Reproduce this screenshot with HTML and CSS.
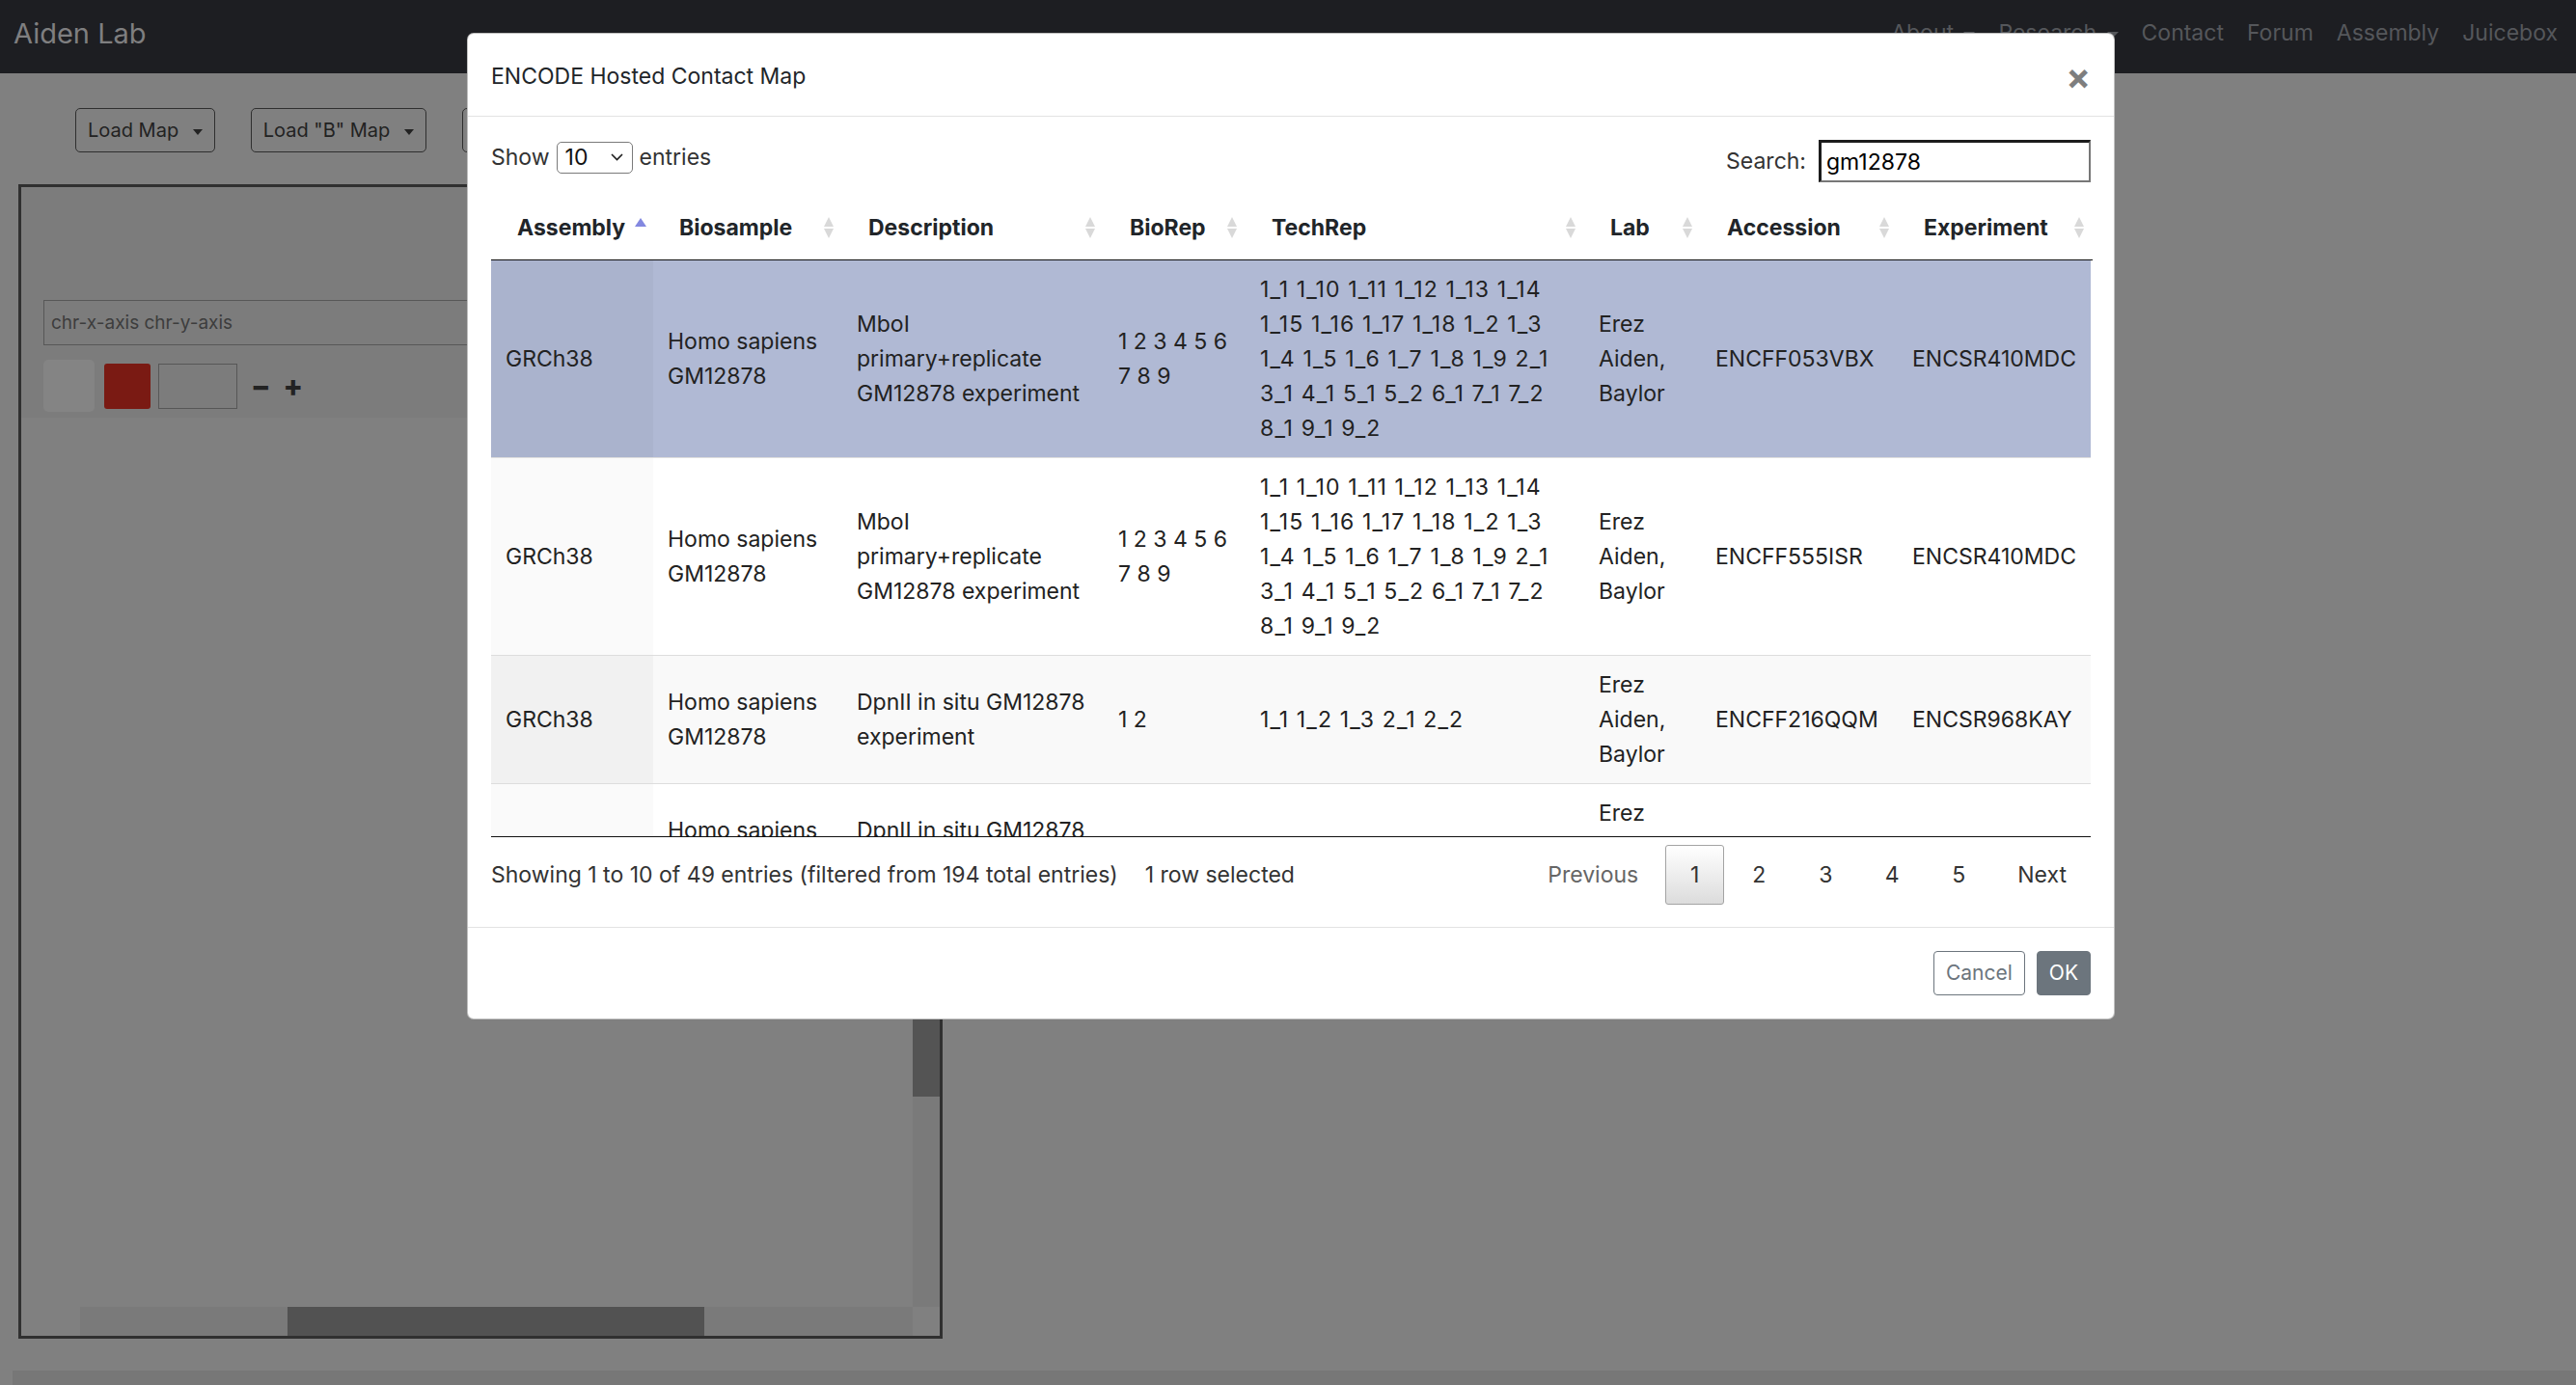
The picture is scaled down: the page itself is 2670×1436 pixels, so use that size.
FILE: index.html
```html
<!DOCTYPE html>
<html lang="en">
<head>
<meta charset="utf-8">
<title>Aiden Lab</title>
<link rel="stylesheet" href="styles.css">
</head>
<body>
<nav class="navbar">
  <span class="brand">Aiden Lab</span>
  <ul class="nav-links">
    <li>About <span class="caret"></span></li>
    <li>Research <span class="caret"></span></li>
    <li>Contact</li>
    <li>Forum</li>
    <li>Assembly</li>
    <li>Juicebox</li>
  </ul>
</nav>

<main class="page">
  <div class="toolbar">
    <button class="tb-btn">Load Map <span class="caret"></span></button>
    <button class="tb-btn">Load "B" Map <span class="caret"></span></button>
    <button class="tb-btn">Load Tracks <span class="caret"></span></button>
  </div>

  <section class="viewer">
    <div class="viewer-top">
      <div class="locus">chr-x-axis chr-y-axis</div>
      <div class="controls">
        <span class="ctl-blank"></span>
        <span class="ctl-red"></span>
        <span class="ctl-white"></span>
        <span class="ctl-sign minus">&minus;</span>
        <span class="ctl-sign plus">+</span>
      </div>
    </div>
    <div class="viewer-main">
      <div class="axis"></div>
      <div class="map"></div>
      <div class="vscroll"><div class="vthumb"></div></div>
      <div class="axis"></div>
      <div class="hscroll"><div class="hthumb"></div></div>
      <div class="corner"></div>
    </div>
  </section>

  <div class="bottom-bar"></div>
</main>

<div class="modal">
  <div class="modal-header">
    <h5 class="modal-title">ENCODE Hosted Contact Map</h5>
    <span class="close">&times;</span>
  </div>
  <div class="modal-body">
    <div class="dt-top">
      <div class="dt-length">
        <span>Show</span>
        <span class="select"><span>10</span><svg width="13" height="8" viewBox="0 0 13 8"><polyline points="1,1 6.5,6.5 12,1" fill="none" stroke="#1e1e1e" stroke-width="1.6"/></svg></span>
        <span>entries</span>
      </div>
      <div class="dt-filter">
        <span>Search:</span>
        <input class="search" type="text" value="gm12878">
      </div>
    </div>

    <table class="dt dt-head">
      <colgroup>
        <col class="c1"><col class="c2"><col class="c3"><col class="c4"><col class="c5"><col class="c6"><col class="c7"><col class="c8">
      </colgroup>
      <thead>
        <tr>
          <th class="sorting_asc">Assembly</th>
          <th class="sorting">Biosample</th>
          <th class="sorting">Description</th>
          <th class="sorting">BioRep</th>
          <th class="sorting">TechRep</th>
          <th class="sorting">Lab</th>
          <th class="sorting">Accession</th>
          <th class="sorting">Experiment</th>
        </tr>
      </thead>
    </table>

    <div class="dt-scroll">
      <table class="dt dt-body">
        <colgroup>
          <col class="c1"><col class="c2"><col class="c3"><col class="c4"><col class="c5"><col class="c6"><col class="c7"><col class="c8">
        </colgroup>
        <tbody>
          <tr class="odd selected">
            <td class="sorting_1">GRCh38</td>
            <td>Homo sapiens<br>GM12878</td>
            <td>MboI<br>primary+replicate<br>GM12878 experiment</td>
            <td>1 2 3 4 5 6<br>7 8 9</td>
            <td class="rep">1_1 1_10 1_11 1_12 1_13 1_14<br>1_15 1_16 1_17 1_18 1_2 1_3<br>1_4 1_5 1_6 1_7 1_8 1_9 2_1<br>3_1 4_1 5_1 5_2 6_1 7_1 7_2<br>8_1 9_1 9_2</td>
            <td>Erez<br>Aiden,<br>Baylor</td>
            <td>ENCFF053VBX</td>
            <td>ENCSR410MDC</td>
          </tr>
          <tr class="even">
            <td class="sorting_1">GRCh38</td>
            <td>Homo sapiens<br>GM12878</td>
            <td>MboI<br>primary+replicate<br>GM12878 experiment</td>
            <td>1 2 3 4 5 6<br>7 8 9</td>
            <td class="rep">1_1 1_10 1_11 1_12 1_13 1_14<br>1_15 1_16 1_17 1_18 1_2 1_3<br>1_4 1_5 1_6 1_7 1_8 1_9 2_1<br>3_1 4_1 5_1 5_2 6_1 7_1 7_2<br>8_1 9_1 9_2</td>
            <td>Erez<br>Aiden,<br>Baylor</td>
            <td>ENCFF555ISR</td>
            <td>ENCSR410MDC</td>
          </tr>
          <tr class="odd">
            <td class="sorting_1">GRCh38</td>
            <td>Homo sapiens<br>GM12878</td>
            <td>DpnII in situ GM12878<br>experiment</td>
            <td>1 2</td>
            <td class="rep">1_1 1_2 1_3 2_1 2_2</td>
            <td>Erez<br>Aiden,<br>Baylor</td>
            <td>ENCFF216QQM</td>
            <td>ENCSR968KAY</td>
          </tr>
          <tr class="even">
            <td class="sorting_1">GRCh38</td>
            <td>Homo sapiens<br>GM12878</td>
            <td>DpnII in situ GM12878<br>experiment</td>
            <td>1 2</td>
            <td class="rep">1_1 1_2 2_1 2_2</td>
            <td>Erez<br>Aiden,<br>Baylor</td>
            <td>ENCFF227XJZ</td>
            <td>ENCSR968KAY</td>
          </tr>
          <tr class="odd">
            <td class="sorting_1">GRCh38</td>
            <td>Homo sapiens<br>GM12878</td>
            <td>MboI in situ GM12878<br>experiment</td>
            <td>1 2</td>
            <td class="rep">1_1 2_1</td>
            <td>Erez<br>Aiden,<br>Baylor</td>
            <td>ENCFF318GOM</td>
            <td>ENCSR671SYB</td>
          </tr>
        </tbody>
      </table>
    </div>

    <div class="dt-bottom">
      <div class="dt-info">Showing 1 to 10 of 49 entries (filtered from 194 total entries)<span class="select-info">1 row selected</span></div>
      <div class="dt-paginate">
        <span class="pg disabled">Previous</span>
        <span class="pg num current">1</span>
        <span class="pg num">2</span>
        <span class="pg num">3</span>
        <span class="pg num">4</span>
        <span class="pg num">5</span>
        <span class="pg">Next</span>
      </div>
    </div>
  </div>
  <div class="modal-footer">
    <button class="btn btn-outline">Cancel</button>
    <button class="btn btn-solid">OK</button>
  </div>
</div>
</body>
</html>
```

FILE: styles.css
```css
* { box-sizing: border-box; }
html, body { margin: 0; padding: 0; }
body {
  width: 2670px;
  height: 1436px;
  overflow: hidden;
  position: relative;
  background: #808080;
  font-family: Inter, "Noto Sans", sans-serif;
  color: #212529;
}

/* ---------- navbar (dimmed) ---------- */
.navbar {
  height: 76px;
  background: #1d1e22;
  display: flex;
  align-items: center;
  justify-content: space-between;
  padding: 0 7px 8px 14px;
}
.brand { font-size: 29px; color: #7f7f80; line-height: 1; }
.nav-links { display: flex; list-style: none; margin: 0; padding: 0; }
.nav-links li { font-size: 23px; color: #55575b; padding: 0 12px; line-height: 36px; }
.caret {
  display: inline-block;
  width: 0; height: 0;
  border-left: 6px solid transparent;
  border-right: 6px solid transparent;
  border-top: 6px solid currentColor;
  vertical-align: middle;
  margin-left: 4px;
}

/* ---------- page behind the modal (dimmed) ---------- */
.toolbar { display: flex; gap: 37px; padding: 36px 0 0 78px; }
.tb-btn {
  font-family: Inter, "Noto Sans", sans-serif;
  font-size: 20px;
  line-height: 32px;
  padding: 6px 12px;
  border: 1px solid #2f2f2f;
  border-radius: 5px;
  background: transparent;
  color: #222;
}
.tb-btn .caret { margin-left: 9px; border-left-width: 5px; border-right-width: 5px; border-top-width: 6px; }

.viewer {
  margin: 33px 0 0 19px;
  width: 958px;
  height: 1197px;
  border: 3px solid #303030;
  display: flex;
  flex-direction: column;
}
.viewer-top {
  height: 239px;
  background: #7c7c7c;
  padding: 117px 0 0 23px;
}
.locus {
  width: 700px;
  height: 47px;
  border: 1px solid #575757;
  font-size: 19px;
  color: #3d3d3d;
  padding: 0 7px;
  display: flex;
  align-items: center;
}
.controls { display: flex; align-items: center; margin-top: 15px; }
.ctl-blank { width: 53px; height: 54px; background: #848484; border-radius: 5px; }
.ctl-red { width: 48px; height: 47px; background: #7a1a13; border-radius: 3px; margin-left: 10px; }
.ctl-white { width: 82px; height: 47px; border: 1px solid #575757; margin-left: 8px; }
.ctl-sign { font-size: 30px; font-weight: 800; color: #232323; line-height: 1; }
.ctl-sign.minus { margin-left: 14px; }
.ctl-sign.plus { margin-left: 13px; }

.viewer-main {
  flex: 1;
  display: grid;
  grid-template-columns: 61px 1fr 28px;
  grid-template-rows: 1fr 30px;
}
.vscroll { background: #7a7a7a; display: flex; flex-direction: column; justify-content: flex-end; padding-bottom: 218px; }
.vthumb { height: 300px; background: #545454; }
.hscroll { background: #7a7a7a; display: flex; padding-left: 215px; }
.hthumb { width: 432px; background: #525252; }

.bottom-bar { margin: 33px 0 0 13px; height: 20px; background: #777777; }

/* ---------- modal ---------- */
.modal {
  position: absolute;
  left: 484px;
  top: 34px;
  width: 1708px;
  background: #fff;
  border: 1px solid rgba(0, 0, 0, 0.25);
  border-radius: 7px;
}
.modal-header {
  display: flex;
  align-items: center;
  justify-content: space-between;
  padding: 26px 24px 23px;
  border-bottom: 1px solid #e3e3e3;
}
.modal-title { margin: 0; font-size: 23px; font-weight: 400; line-height: 36px; color: #212529; }
.close { font-size: 38px; font-weight: 700; line-height: 36px; color: #000; opacity: 0.5; }

.modal-body { padding: 24px; font-size: 23px; }

.dt-top { display: flex; align-items: flex-start; justify-content: space-between; height: 44px; }
.dt-length { display: flex; align-items: center; gap: 7px; height: 36px; color: #333; }
.select {
  width: 79px;
  height: 33px;
  border: 1px solid #7a7a7a;
  border-radius: 5px;
  display: flex;
  align-items: center;
  justify-content: space-between;
  padding: 0 9px 0 8px;
  color: #111;
}
.dt-filter { display: flex; align-items: center; height: 44px; color: #333; }
.search {
  margin-left: 13px;
  width: 282px;
  height: 44px;
  border-style: solid;
  border-width: 3px 2px 2px 3px;
  border-color: #1c1c1c #777 #777 #1c1c1c;
  padding: 0 5px;
  font-family: Inter, "Noto Sans", sans-serif;
  font-size: 23px;
  color: #000;
  outline: none;
}

.dt {
  width: 1660px;
  table-layout: fixed;
  border-collapse: separate;
  border-spacing: 0;
}
.c1 { width: 168px; }
.c2 { width: 196px; }
.c3 { width: 271px; }
.c4 { width: 147px; }
.c5 { width: 351px; }
.c6 { width: 121px; }
.c7 { width: 204px; }
.c8 { width: 202px; }

.dt-head { margin-top: 14px; }
.dt-head th {
  position: relative;
  text-align: left;
  font-weight: 700;
  line-height: 36px;
  padding: 15px 27px;
  color: #212529;
  border-bottom: 1px solid #111;
  white-space: nowrap;
}
.dt-head th.sorting::before,
.dt-head th.sorting::after,
.dt-head th.sorting_asc::before {
  content: "";
  position: absolute;
  right: 9px;
  width: 0;
  height: 0;
  border-left: 5.5px solid transparent;
  border-right: 5.5px solid transparent;
}
.dt-head th.sorting::before { top: calc(50% - 11px); border-bottom: 10px solid #d9d9d9; }
.dt-head th.sorting::after { top: calc(50% + 1px); border-top: 10px solid #d9d9d9; }
.dt-head th.sorting_asc::before {
  right: 7px;
  top: calc(50% - 10px);
  border-left-width: 6px;
  border-right-width: 6px;
  border-bottom: 9px solid #8388e0;
}

.dt-scroll {
  height: 598px;
  overflow: hidden;
  border-bottom: 1px solid #111;
}
.dt-body td {
  padding: 12px 15px;
  line-height: 36px;
  vertical-align: middle;
  white-space: nowrap;
  color: #222;
  border-top: 1px solid #ddd;
}
.dt-body td.rep { letter-spacing: 1.15px; }
.dt-body tr:first-child td { border-top: none; }
.dt-body tr.odd td { background: #f9f9f9; }
.dt-body tr.odd td.sorting_1 { background: #f1f1f1; }
.dt-body tr.even td { background: #fff; }
.dt-body tr.even td.sorting_1 { background: #fafafa; }
.dt-body tr.selected td { background: #b0b9d4; }
.dt-body tr.selected td.sorting_1 { background: #aab3cd; }

.dt-bottom {
  display: flex;
  align-items: center;
  justify-content: space-between;
  margin-top: 8px;
  height: 61px;
  color: #333;
}
.select-info { margin-left: 28px; }
.dt-paginate { display: flex; align-items: center; }
.pg {
  display: inline-block;
  padding: 12px 24px;
  line-height: 36px;
  margin-left: 3px;
  border: 1px solid transparent;
  border-radius: 3px;
  color: #333;
  text-align: center;
}
.pg.num { min-width: 66px; padding-left: 0; padding-right: 0; }
.pg.num.current { min-width: 61px; }
.pg.disabled { color: #666; }
.pg.current {
  border-color: #a3a3a3;
  background: linear-gradient(to bottom, #ffffff 0%, #dcdcdc 100%);
}

.modal-footer {
  display: flex;
  justify-content: flex-end;
  gap: 12px;
  padding: 24px;
  border-top: 1px solid #e3e3e3;
}
.btn {
  font-family: Inter, "Noto Sans", sans-serif;
  font-size: 21px;
  line-height: 32px;
  padding: 6px 12px;
  border-radius: 4px;
  border: 1px solid #6c757d;
}
.btn-outline { background: #fff; color: #6c757d; }
.btn-solid { background: #6c757d; color: #fff; }
```
